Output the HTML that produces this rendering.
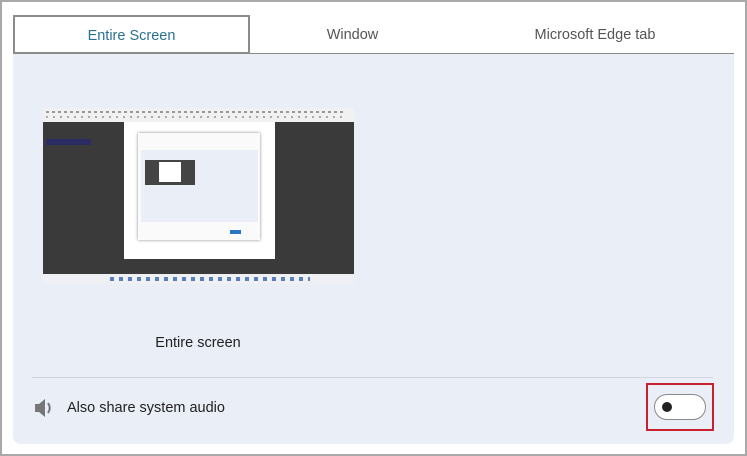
<!DOCTYPE html>
<html><head><style>
*{margin:0;padding:0;box-sizing:border-box}
body{width:747px;height:456px;background:#fff;font-family:"Liberation Sans",sans-serif;position:relative;overflow:hidden}
.frame{position:absolute;left:0;top:0;width:747px;height:456px;border:2px solid #a9a9a9}
.panel{position:absolute;left:13px;top:54px;width:721px;height:390px;background:#e9eef7;border-radius:0 0 8px 8px}
.tabline{position:absolute;left:249px;top:53px;width:485px;height:1px;background:#8a8a8a}
.tab1{position:absolute;left:13px;top:15px;width:237px;height:39px;border:2px solid #8c8c8c;background:#fff;color:#2a7291;font-size:14.5px;text-align:center;line-height:38px}
.tab{position:absolute;top:15px;height:40px;line-height:40px;font-size:14.5px;color:#555;text-align:center}
.a{position:absolute}
</style></head><body>
<div class="frame"></div>
<div class="panel"></div>
<div class="tabline"></div>
<div class="tab1">Entire Screen</div>
<div class="tab" style="left:250px;width:205px">Window</div>
<div class="tab" style="left:480px;width:230px">Microsoft Edge tab</div>

<div class="a" style="left:43px;top:108px;width:311px;height:176px;background:#3a3a3a"></div>
<div class="a" style="left:43px;top:108px;width:311px;height:14px;background:#f1f1f1"></div>
<div class="a" style="left:46px;top:111px;width:300px;height:2px;background:repeating-linear-gradient(90deg,#999 0 3px,transparent 3px 6px)"></div>
<div class="a" style="left:46px;top:116px;width:300px;height:2px;background:repeating-linear-gradient(90deg,#aaa 0 2px,transparent 2px 7px)"></div>
<div class="a" style="left:46px;top:139px;width:45px;height:6px;background:#2c2c64"></div>
<div class="a" style="left:124px;top:122px;width:151px;height:137px;background:#fff"></div>
<div class="a" style="left:138px;top:133px;width:122px;height:107px;background:#fafafa;box-shadow:0 0 3px #888"></div>
<div class="a" style="left:141px;top:150px;width:117px;height:72px;background:#e9eef7"></div>
<div class="a" style="left:145px;top:160px;width:50px;height:25px;background:#444"></div>
<div class="a" style="left:159px;top:162px;width:22px;height:20px;background:#fff"></div>
<div class="a" style="left:230px;top:230px;width:11px;height:4px;background:#2877c5"></div>
<div class="a" style="left:43px;top:274px;width:311px;height:10px;background:#eef0f4"></div>
<div class="a" style="left:110px;top:277px;width:200px;height:4px;background:repeating-linear-gradient(90deg,#5a7fbf 0 4px,transparent 4px 9px)"></div>

<div class="a" style="left:98px;top:335px;width:200px;text-align:center;font-size:14.5px;color:#222">Entire screen</div>
<div class="a" style="left:32px;top:377px;width:681px;height:1px;background:#cfd6e0"></div>

<svg class="a" style="left:34px;top:398px" width="20" height="20" viewBox="0 0 20 20"><path d="M1 6h4l6-5v18l-6-5H1z" fill="#777"/><path d="M14 5q3.5 5 0 10" stroke="#777" stroke-width="2" fill="none"/></svg>
<div class="a" style="left:67px;top:400px;font-size:14.5px;color:#222">Also share system audio</div>

<div class="a" style="left:646px;top:383px;width:68px;height:48px;border:2px solid #c8202f"></div>
<div class="a" style="left:654px;top:394px;width:52px;height:26px;border:1px solid #888;border-radius:13px;background:#fff"></div>
<div class="a" style="left:662px;top:402px;width:10px;height:10px;border-radius:50%;background:#222"></div>
</body></html>
